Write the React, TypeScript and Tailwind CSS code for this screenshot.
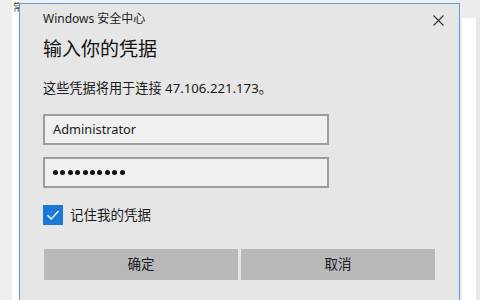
export default function App() {
  const font = {
    fontFamily: '"Noto Sans", "Noto Sans CJK SC", sans-serif',
  };

  return (
    <div
      className="flex h-[300px] w-[480px] overflow-hidden bg-[#efefef] text-[#1a1a1a]"
      style={font}
    >
      {/* Background window, left */}
      <div className="flex h-full w-[19px] shrink-0">
        <div className="h-full w-[12px] bg-[#eeeeee]" />
        <div className="relative h-full w-[7px] overflow-hidden bg-white">
          <span className="absolute left-[1px] top-[2px] text-[10px] leading-none text-[#444]">常</span>
        </div>
      </div>

      {/* Credential dialog */}
      <div className="mt-[3px] flex h-[310px] w-[441px] shrink-0 flex-col border border-[#5b9bd8] bg-[#e6e6e6]">
        <div className="flex items-center justify-between pl-[23px] pr-[15px] pt-[7px]">
          <span className="text-[12px] leading-[16px] text-[#222]">Windows 安全中心</span>
          <svg width="11" height="11" viewBox="0 0 11 11" className="mt-[2px]">
            <path d="M0.5 0.5 L10.5 10.5 M10.5 0.5 L0.5 10.5" stroke="#333" strokeWidth="1.1" />
          </svg>
        </div>

        <div className="pl-[23px] pr-[24px]">
          <h1 className="mt-[9px] text-[19px] leading-[26px] text-[#111]">输入你的凭据</h1>
          <p className="mt-[17px] text-[13.2px] leading-[18px] text-[#1a1a1a]">
            这些凭据将用于连接 47.106.221.173。
          </p>

          <div className="mt-[17px] flex h-[31px] w-[286px] items-center border-2 border-[#9d9d9d] bg-[#f0f0f0] px-[8px]">
            <span className="text-[12.8px] leading-none text-[#1a1a1a]">Administrator</span>
          </div>
          <div className="mt-[12px] flex h-[31px] w-[286px] items-center gap-[2.4px] border-2 border-[#9d9d9d] bg-[#f0f0f0] px-[8px]">
            {Array.from({ length: 10 }).map((_, i) => (
              <span key={i} className="h-[5px] w-[5px] rounded-full bg-[#111]" />
            ))}
          </div>

          <div className="mt-[17px] flex items-center gap-[7px]">
            <div className="flex h-[20px] w-[20px] items-center justify-center bg-[#1a78d6]">
              <svg width="14" height="14" viewBox="0 0 14 14">
                <path d="M1.5 7.2 L5.3 11 L12.5 3" fill="none" stroke="white" strokeWidth="1.4" />
              </svg>
            </div>
            <span className="text-[13.5px] leading-[18px] text-[#1a1a1a]">记住我的凭据</span>
          </div>

          <div className="mt-[24px] flex gap-[3px] pl-[1px]">
            <button className="flex h-[31px] w-[194px] items-center justify-center bg-[#b9b9b9] text-[13.5px] text-[#1a1a1a]">
              确定
            </button>
            <button className="flex h-[31px] w-[194px] items-center justify-center bg-[#b9b9b9] text-[13.5px] text-[#1a1a1a]">
              取消
            </button>
          </div>
        </div>
      </div>

      {/* Background window, right */}
      <div className="flex h-full flex-1 flex-col">
        <div className="h-[18px] bg-[#ededed]" />
        <div className="flex flex-1">
          <div className="w-[2px] bg-[#ededed]" />
          <div className="flex-1 bg-white" />
          <div className="w-[4px] bg-[#e9e9e9]" />
        </div>
      </div>
    </div>
  );
}
